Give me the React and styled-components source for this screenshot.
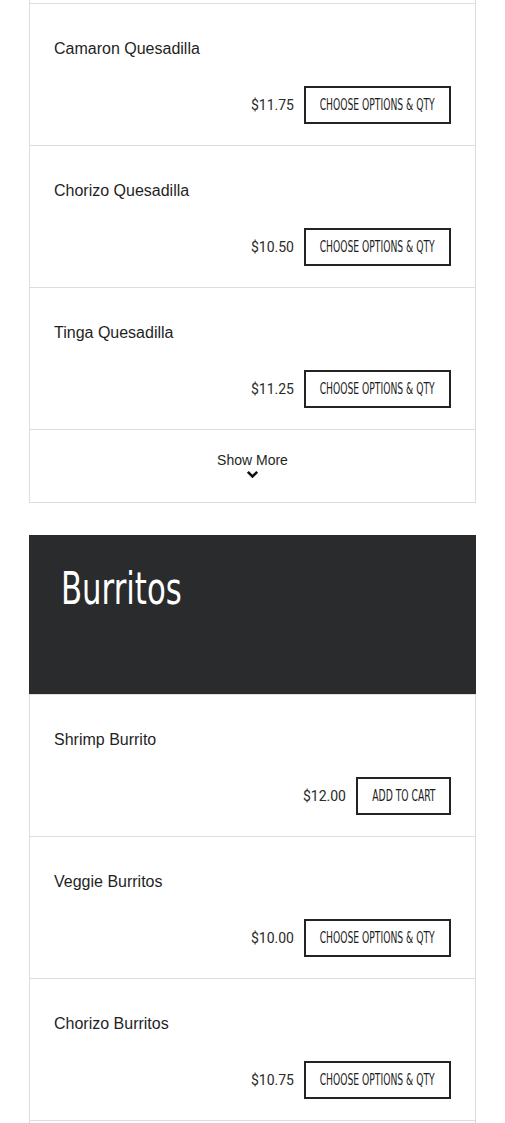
import React from 'react'
import styled, { createGlobalStyle } from 'styled-components'

const GlobalStyle = createGlobalStyle`
  body {
    margin: 0;
    background: #ffffff;
    font-family: "Liberation Sans", Arial, sans-serif;
    color: #222222;
  }
`

const Page = styled.div`
  padding: 0 29px;
`

const Card = styled.div`
  border-left: 1px solid #dddddd;
  border-right: 1px solid #dddddd;
  padding-top: ${(p) => (p.$clipped ? '3px' : '0')};
`

const Item = styled.div`
  border-top: 1px solid #dddddd;
  padding: 33px 24px 21px 24px;
`

const Continuation = styled.div`
  border-top: 1px solid #dddddd;
  height: 12px;
`

const Name = styled.div`
  font-size: 16px;
  line-height: 24px;
  color: #1f1f1f;
`

const Actions = styled.div`
  display: flex;
  justify-content: flex-end;
  align-items: center;
  gap: 10px;
  margin-top: 25px;
`

const Price = styled.span`
  font-family: Roboto, "Liberation Sans", sans-serif;
  font-size: 14px;
  color: #2a2a2a;
`

const Button = styled.button`
  width: ${(p) => p.$width}px;
  height: 38px;
  padding: 0;
  border: 2px solid #232323;
  background: #ffffff;
  color: #1d1d1d;
  display: flex;
  align-items: center;
  justify-content: center;
  overflow: visible;
  cursor: pointer;
`

const Label = styled.span`
  display: inline-block;
  white-space: nowrap;
  font-family: "DejaVu Sans Condensed", "DejaVu Sans", sans-serif;
  font-size: 15.5px;
  text-transform: uppercase;
  transform: scaleX(0.66);
`

const ShowMore = styled.div`
  border-top: 1px solid #dddddd;
  border-bottom: 1px solid #dddddd;
  padding: 21px 0 23px;
  display: flex;
  flex-direction: column;
  align-items: center;
  font-size: 14px;
  line-height: 18px;
  color: #1f1f1f;
  cursor: pointer;
`

const Chevron = styled.svg`
  display: block;
  margin-top: 1px;
`

const Header = styled.div`
  margin-top: 32px;
  height: 159px;
  box-sizing: border-box;
  padding: 31px 32px;
  background: #292b2d;
`

const Title = styled.h2`
  display: inline-block;
  margin: 0;
  font-family: "DejaVu Sans Condensed", "DejaVu Sans", sans-serif;
  font-weight: 400;
  font-size: 45px;
  line-height: 1;
  color: #ffffff;
  transform: scaleX(0.76);
  transform-origin: left center;
`

const quesadillas = [
  { name: 'Camaron Quesadilla', price: '$11.75', action: 'Choose Options & Qty' },
  { name: 'Chorizo Quesadilla', price: '$10.50', action: 'Choose Options & Qty' },
  { name: 'Tinga Quesadilla', price: '$11.25', action: 'Choose Options & Qty' },
]

const burritos = [
  { name: 'Shrimp Burrito', price: '$12.00', action: 'Add to Cart' },
  { name: 'Veggie Burritos', price: '$10.00', action: 'Choose Options & Qty' },
  { name: 'Chorizo Burritos', price: '$10.75', action: 'Choose Options & Qty' },
]

const MenuItem = ({ item }) => (
  <Item>
    <Name>{item.name}</Name>
    <Actions>
      <Price>{item.price}</Price>
      <Button $width={item.action === 'Add to Cart' ? 95 : 147}>
        <Label>{item.action}</Label>
      </Button>
    </Actions>
  </Item>
)

const App = () => {
  return (
    <Page>
      <GlobalStyle />
      <Card $clipped>
        {quesadillas.map((item) => (
          <MenuItem item={item} key={item.name} />
        ))}
        <ShowMore>
          Show More
          <Chevron width="13" height="9" viewBox="0 0 13 9">
            <path d="M1.8 1.8 L6.5 6.5 L11.2 1.8" fill="none" stroke="#111" strokeWidth="2.6" />
          </Chevron>
        </ShowMore>
      </Card>

      <Header>
        <Title>Burritos</Title>
      </Header>
      <Card>
        {burritos.map((item) => (
          <MenuItem item={item} key={item.name} />
        ))}
        <Continuation />
      </Card>
    </Page>
  )
}

export default App
